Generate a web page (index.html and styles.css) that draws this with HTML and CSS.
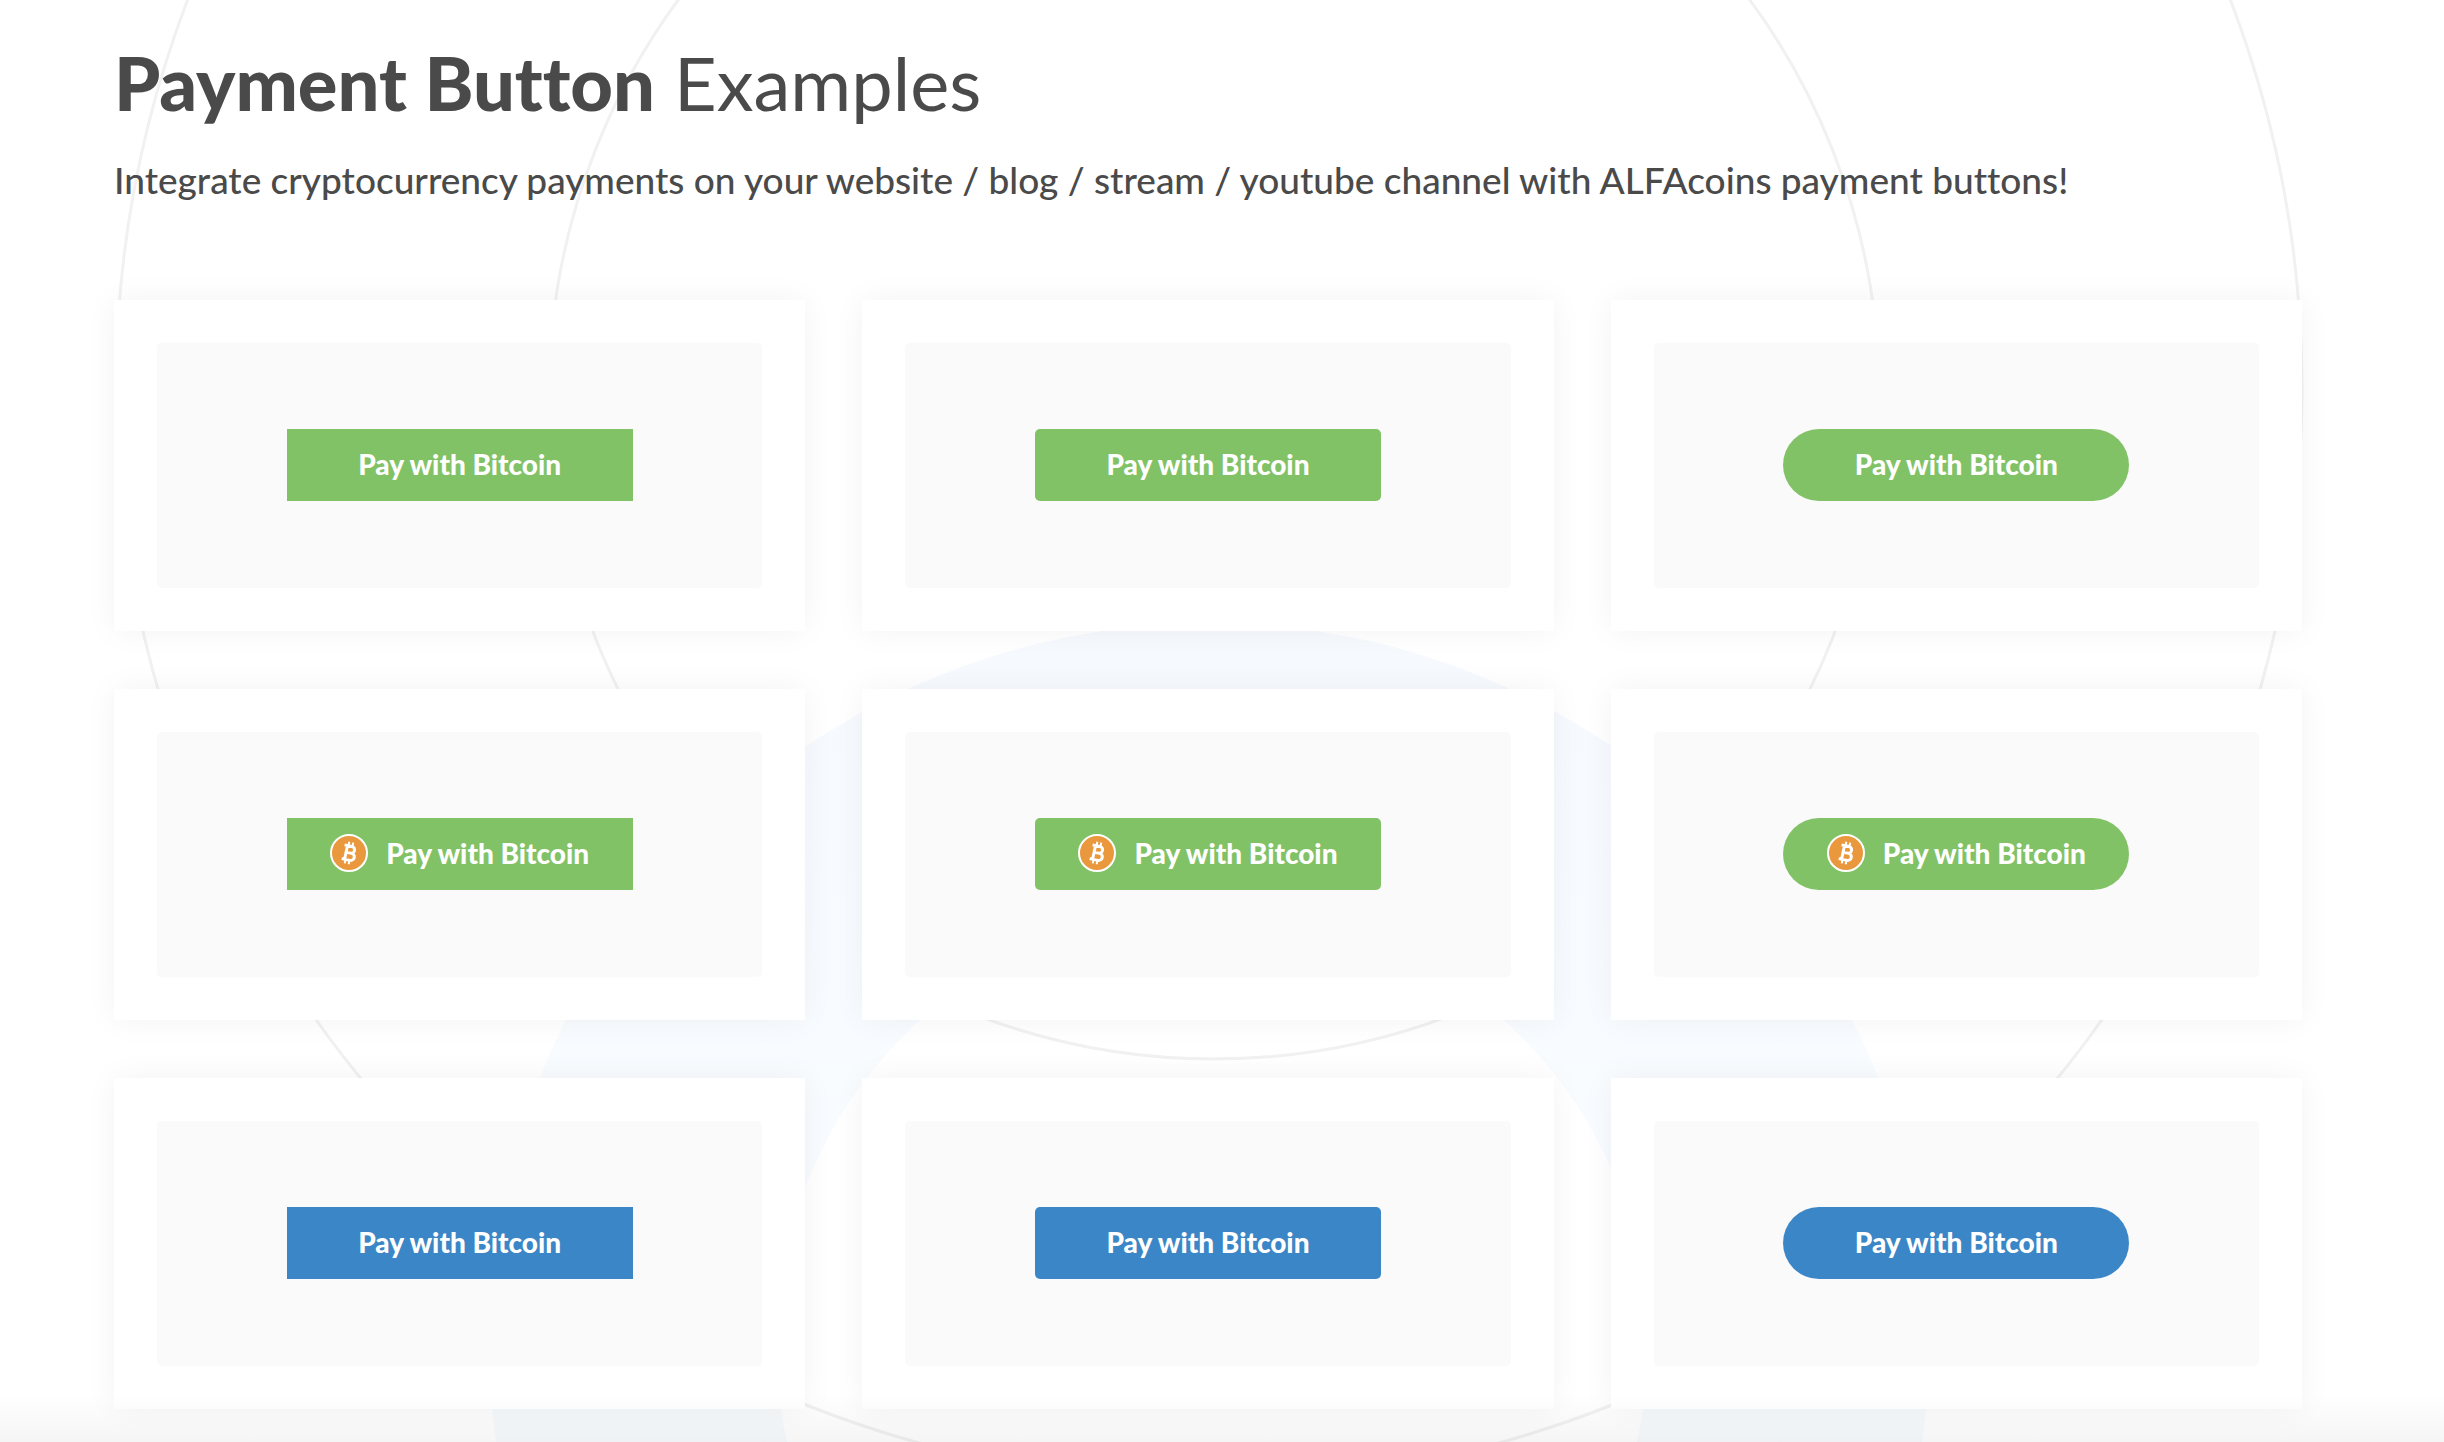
FILE: index.html
```
<!DOCTYPE html>
<html lang="en">
<head>
    <meta charset="UTF-8">
    <meta name="viewport" content="width=device-width, initial-scale=1.0">
    <title>Payment Button Examples</title>
    <link rel="stylesheet" href="styles.css">
</head>
<body>
    <svg width="0" height="0" class="sprite" aria-hidden="true">
        <symbol id="btc" viewBox="0 0 38 38">
            <circle cx="19" cy="19" r="18" fill="#e9983d" stroke="#fff" stroke-width="2"/>
            <g transform="translate(19 19) rotate(12)" fill="none" stroke="#fff">
                <path d="M-6-7H1.5a3.4 3.4 0 0 1 0 6.8H-3M1.5-.2H2.5a3.6 3.6 0 0 1 0 7.2H-6M-3-7V7" stroke-width="3"/>
                <path d="M-2-11v4M2-11v4M-2 7v4M2 7v4" stroke-width="2"/>
            </g>
        </symbol>
    </svg>

    <section class="examples">
        <svg class="rings" viewBox="0 0 2444 1442" preserveAspectRatio="xMidYMin slice" aria-hidden="true">
            <defs>
                <linearGradient id="ringFill" x1="0" y1="0" x2="0" y2="1">
                    <stop offset="0" stop-color="#f6faff"/>
                    <stop offset="0.32" stop-color="#f8fcff"/>
                    <stop offset="0.4" stop-color="#f9fbff"/>
                    <stop offset="0.55" stop-color="#f8fbfe"/>
                </linearGradient>
            </defs>
            <circle cx="1209" cy="389" r="1093" class="ring-line"/>
            <circle cx="1214" cy="394" r="665" class="ring-line"/>
            <path fill="url(#ringFill)" fill-rule="evenodd" d="M489 1343a720 720 0 1 1 1440 0a720 720 0 1 1-1440 0zM776 1344a436 436 0 1 0 872 0a436 436 0 1 0-872 0z"/>
        </svg>

        <h1><strong>Payment Button</strong> Examples</h1>
        <p class="lead">Integrate cryptocurrency payments on your website / blog / stream / youtube channel with ALFAcoins payment buttons!</p>

        <div class="grid">
            <div class="card"><div class="preview"><button type="button" class="pay green">Pay with Bitcoin</button></div></div>
            <div class="card"><div class="preview"><button type="button" class="pay green rounded">Pay with Bitcoin</button></div></div>
            <div class="card"><div class="preview"><button type="button" class="pay green pill">Pay with Bitcoin</button></div></div>

            <div class="card"><div class="preview"><button type="button" class="pay green"><svg class="coin"><use href="#btc"/></svg>Pay with Bitcoin</button></div></div>
            <div class="card"><div class="preview"><button type="button" class="pay green rounded"><svg class="coin"><use href="#btc"/></svg>Pay with Bitcoin</button></div></div>
            <div class="card"><div class="preview"><button type="button" class="pay green pill"><svg class="coin"><use href="#btc"/></svg>Pay with Bitcoin</button></div></div>

            <div class="card"><div class="preview"><button type="button" class="pay blue">Pay with Bitcoin</button></div></div>
            <div class="card"><div class="preview"><button type="button" class="pay blue rounded">Pay with Bitcoin</button></div></div>
            <div class="card"><div class="preview"><button type="button" class="pay blue pill">Pay with Bitcoin</button></div></div>
        </div>
    </section>
</body>
</html>
```

FILE: styles.css
```
* {
    box-sizing: border-box;
}

body {
    margin: 0;
    font-family: Lato, "Open Sans", sans-serif;
    font-variant-ligatures: none;
    background-color: #fff;
    color: #4a4a4a;
}

.sprite {
    position: absolute;
}

.examples {
    position: relative;
    overflow: hidden;
    min-height: 100vh;
    padding: 38px 142px 32px 114px;
}

/* soft shade where the next section starts */
.examples::after {
    content: "";
    position: absolute;
    left: 0;
    right: 0;
    bottom: 0;
    height: 48px;
    background: linear-gradient(rgba(0, 0, 0, 0), rgba(0, 0, 0, 0.04));
    pointer-events: none;
}

.rings {
    position: absolute;
    top: 0;
    left: 0;
    width: 100%;
    height: 100%;
    z-index: -1;
}

.ring-line {
    fill: none;
    stroke: #f1f1f1;
    stroke-width: 3;
}

h1 {
    margin: 0;
    font-size: 74px;
    line-height: 90px;
    font-weight: 400;
}

h1 strong {
    font-weight: 900;
}

.lead {
    margin: 28px 0 96px;
    font-size: 37px;
    line-height: 48px;
    font-weight: 500;
}

.grid {
    display: grid;
    grid-template-columns: repeat(3, 1fr);
    gap: 58px 57px;
}

.card {
    padding: 43px;
    background-color: #fff;
    box-shadow: 0 0 30px rgba(0, 0, 0, 0.05);
}

.preview {
    display: flex;
    justify-content: center;
    padding: 86px 20px 87px;
    background-color: #fafafa;
    border-radius: 5px;
}

.pay {
    display: flex;
    align-items: center;
    justify-content: center;
    gap: 18px;
    width: 346px;
    height: 72px;
    padding: 0 0 2px;
    border: 0;
    font-family: inherit;
    font-variant-ligatures: inherit;
    font-size: 28px;
    font-weight: 900;
    color: #fff;
    cursor: pointer;
}

.green {
    background-color: #82c267;
}

.blue {
    background-color: #3b86c6;
}

.rounded {
    border-radius: 5px;
}

.pill {
    border-radius: 36px;
}

.coin {
    width: 38px;
    height: 38px;
}
```
